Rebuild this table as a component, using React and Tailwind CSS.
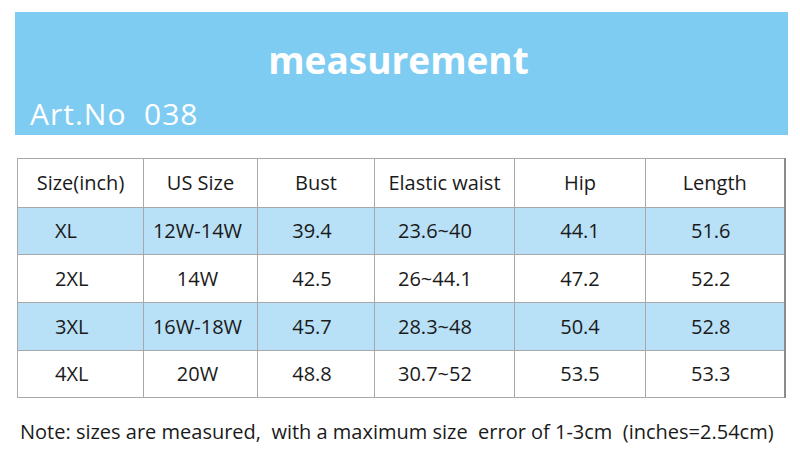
import React from 'react';

const headers = ['Size(inch)', 'US Size', 'Bust', 'Elastic waist', 'Hip', 'Length'];

const rows = [
  ['XL', '12W-14W', '39.4', '23.6~40', '44.1', '51.6'],
  ['2XL', '14W', '42.5', '26~44.1', '47.2', '52.2'],
  ['3XL', '16W-18W', '45.7', '28.3~48', '50.4', '52.8'],
  ['4XL', '20W', '48.8', '30.7~52', '53.5', '53.3'],
];

const widths = ['w-[126px]', 'w-[114px]', 'w-[117px]', 'w-[140px]', 'w-[131px]', 'w-[139px]'];

const cellAlign = [
  'text-left pl-[37px]',
  'text-center pr-[6px]',
  'text-center pr-[8px]',
  'text-left pl-[23px]',
  'text-center',
  'text-center pr-[8px]',
];

const rowHeights = ['h-[47px]', 'h-[48px]', 'h-[48px]', 'h-[47px]'];

const App = () => {
  return (
    <div className="w-[800px] h-[470px] bg-white pt-[12px] font-['Open_Sans',sans-serif] text-[#1a1a1a]">
      <div className="ml-[15px] w-[773px] h-[123px] bg-[#7fccf3] flex flex-col text-white">
        <h1 className="text-center font-bold text-[37px] leading-none mt-[29px] pr-[6px]">measurement</h1>
        <div className="ml-[15px] mt-[21px] text-[30px] leading-none whitespace-pre tracking-[1px]">Art.No  038</div>
      </div>

      <table className="ml-[17px] mt-[23px] w-[767px] border-collapse table-fixed text-[20px] border border-[#9a9a9a] border-r-2 border-r-[#8c8c8c]">
        <thead>
          <tr className="h-[49px]">
            {headers.map((h, i) => (
              <th key={i} className={`${widths[i]} font-normal text-center border border-[#a8a8a8]`}>
                {h}
              </th>
            ))}
          </tr>
        </thead>
        <tbody>
          {rows.map((row, r) => (
            <tr key={r} className={`${rowHeights[r]} ${r % 2 === 0 ? 'bg-[#b8e0f6]' : 'bg-white'}`}>
              {row.map((c, i) => (
                <td key={i} className={`${cellAlign[i]} border border-[#a8a8a8]`}>
                  {c}
                </td>
              ))}
            </tr>
          ))}
        </tbody>
      </table>

      <p className="ml-[20px] mt-[19px] text-[20px] whitespace-pre">
        Note: sizes are measured,  with a maximum size  error of 1-3cm  (inches=2.54cm)
      </p>
    </div>
  );
};

export default App;
